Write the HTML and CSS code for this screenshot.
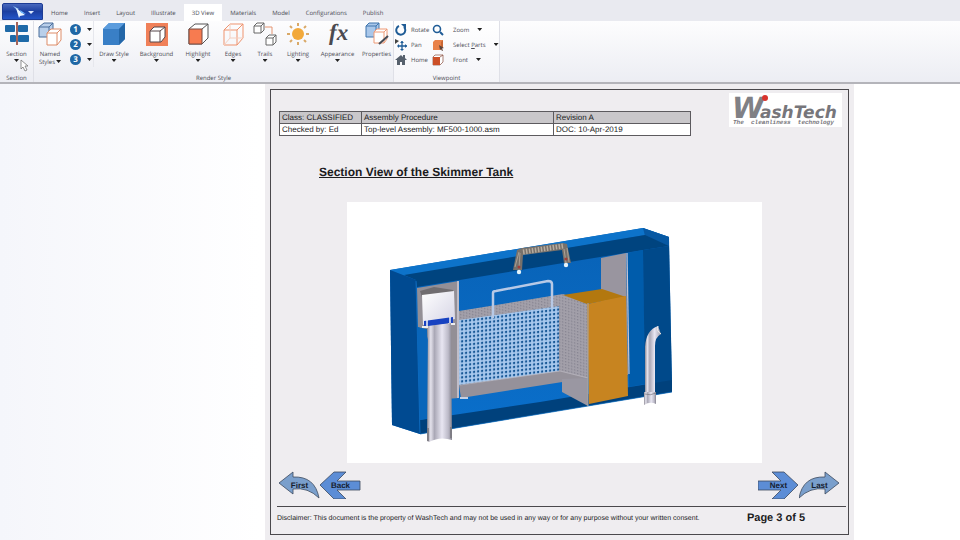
FILE: index.html
```html
<!DOCTYPE html>
<html lang="en">
<head>
<meta charset="utf-8">
<title>Section View of the Skimmer Tank</title>
<link rel="stylesheet" href="styles.css">
</head>
<body>
<header class="app-bar">
  <nav class="tabs" aria-label="Ribbon tabs">
    <button class="file-button" aria-label="File">
      <svg width="28" height="14" viewBox="0 0 28 14"><path d="M4 1l6 3-2 1z" fill="#9fd0ff"/><path d="M7 3l9 7-5 1-1 2z" fill="#eaf6ff"/><path d="M11 5l6 4-5-1z" fill="#6fb6ff"/><path d="M19 6h6l-3 3z" fill="#dbe9ff"/></svg>
    </button>
    <button class="tab">Home</button>
    <button class="tab">Insert</button>
    <button class="tab">Layout</button>
    <button class="tab">Illustrate</button>
    <button class="tab tab-active" aria-current="page">3D View</button>
    <button class="tab">Materials</button>
    <button class="tab">Model</button>
    <button class="tab">Configurations</button>
    <button class="tab">Publish</button>
  </nav>
  <div class="ribbon">
    <section class="group group-section">
      <div class="tools">
        <button class="tool">
          <svg class="icon" viewBox="0 0 24 24"><g fill="#1f6aa8"><rect x="0" y="3" width="10" height="7" rx="1"/><rect x="13" y="3" width="10" height="7" rx="1"/><rect x="5" y="13" width="6" height="7" rx="1"/><rect x="13" y="13" width="11" height="7" rx="1"/></g><path d="M12 0v23" stroke="#a5645a" stroke-width="2"/></svg>
          <span>Section</span><i class="caret"></i>
        </button>
      </div>
      <h2>Section</h2>
      <svg class="cursor" width="9" height="13" viewBox="0 0 9 13"><path d="M1 1v9l2-2 2 4 2-1-2-4h3z" fill="#fff" stroke="#777" stroke-width=".8"/></svg>
    </section>
    <section class="group group-style">
      <div class="tools tools-style">
        <button class="tool">
          <svg class="icon" viewBox="0 0 24 24"><path d="M1 5l5-4h9v10l-4 4H1z" fill="#b9cfea" stroke="#4a6f9c"/><path d="M1 5h10v10M11 5l4-4" fill="none" stroke="#4a6f9c"/><path d="M9 11l4-4h10v11l-4 5H9z" fill="#fff" stroke="#dd8c68"/><path d="M9 11h10v12M19 11l4-4" fill="none" stroke="#dd8c68"/></svg>
          <span>Named</span><span>Styles<i class="caret caret-inline"></i></span>
        </button>
        <div class="numbers">
          <button class="number"><b>1</b><i class="caret"></i></button>
          <button class="number"><b>2</b><i class="caret"></i></button>
          <button class="number"><b>3</b><i class="caret"></i></button>
        </div>
        <button class="tool">
          <svg class="icon" viewBox="0 0 24 24"><path d="M1 7l6-6h16v16l-6 6H1z" fill="#397fc6"/><path d="M1 7l6-6h16l-6 6z" fill="#5b9cdd"/><path d="M17 7l6-6v16l-6 6z" fill="#2467a8"/></svg>
          <span>Draw Style</span><i class="caret"></i>
        </button>
        <button class="tool">
          <svg class="icon" viewBox="0 0 24 24"><rect x="1" y="1" width="22" height="23" fill="#f08059"/><path d="M5 9l4-4h11v10l-4 5H5z" fill="#fff" stroke="#56474a"/><path d="M5 9h10v11M15 9l5-4" fill="none" stroke="#56474a"/></svg>
          <span>Background</span><i class="caret"></i>
        </button>
        <button class="tool">
          <svg class="icon" viewBox="0 0 24 24"><path d="M3 7l6-5h13v14l-6 6H3z" fill="#fff" stroke="#555"/><path d="M3 7h13v15H3z" fill="#f77b50" stroke="#7b4b40"/><path d="M16 7l6-5" stroke="#555"/></svg>
          <span>Highlight</span><i class="caret"></i>
        </button>
        <button class="tool">
          <svg class="icon" viewBox="0 0 24 24"><g fill="none" stroke="#ef936e"><path d="M3 8l6-6h13v14l-6 7H3zM3 8h13v15M16 8l6-6"/><path d="M9 2v14h13M9 16l-6 7" stroke="#f5cfc0"/></g></svg>
          <span>Edges</span><i class="caret"></i>
        </button>
        <button class="tool">
          <svg class="icon" viewBox="0 0 24 24"><g fill="#fff" stroke="#666"><path d="M1 4l3-3h7v7l-3 3H1zM1 4h7v7M8 4l3-3M13 16l3-3h7v7l-3 3h-7zM13 16h7v7M20 16l3-3"/></g><path d="M12 5h7v7" fill="none" stroke="#e59470"/></svg>
          <span>Trails</span><i class="caret"></i>
        </button>
        <button class="tool">
          <svg class="icon" viewBox="0 0 24 24"><circle cx="12" cy="12" r="6" fill="#f2a93b"/><path d="M12 1v3M12 20v3M1 12h3M20 12h3M4 4l2 2M18 18l2 2M4 20l2-2M18 6l2-2" stroke="#d9a968" stroke-width="2"/></svg>
          <span>Lighting</span><i class="caret"></i>
        </button>
        <button class="tool">
          <svg class="icon" viewBox="0 0 24 24"><text class="fx" x="3" y="18">fx</text></svg>
          <span>Appearance</span><i class="caret"></i>
        </button>
        <button class="tool">
          <svg class="icon" viewBox="0 0 24 24"><path d="M1 4l3-3h10v10l-3 4H1z" fill="#a9c7ea" stroke="#3f74ad"/><path d="M1 4h10v11M11 4l3-3" fill="none" stroke="#3f74ad"/><path d="M9 10l3-3h10v10l-3 4H9z" fill="#fff" stroke="#ee9a76"/><path d="M9 10h10v11M19 10l3-3" fill="none" stroke="#ee9a76"/><path d="M14 22l9-8" stroke="#444b55" stroke-width="2"/></svg>
          <span>Properties</span>
        </button>
      </div>
      <h2>Render Style</h2>
    </section>
    <section class="group group-view">
      <div class="view-grid">
        <button class="view"><svg viewBox="0 0 12 12"><path d="M4 2a4.500 4.500 0 1 0 5 1" fill="none" stroke="#1f5c96" stroke-width="2"/><path d="M6 0h5v5z" fill="#1f5c96"/></svg>Rotate</button>
        <button class="view"><svg viewBox="0 0 12 12"><circle cx="5" cy="5" r="3.500" fill="none" stroke="#1f5c96" stroke-width="1.600"/><path d="M8 8l3 3" stroke="#1f5c96" stroke-width="2"/></svg><span class="view-name">Zoom</span><i class="caret"></i></button>
        <button class="view"><svg viewBox="0 0 12 12"><path d="M0 0l4 2-4 3z" fill="#444"/><path d="M7 2v9M3 7h9" stroke="#1f5c96" stroke-width="1.300"/><path d="M5 4l2-2 2 2zM5 10l2 2 2-2zM4 5L2 7l2 2zM10 5l2 2-2 2z" fill="#1f5c96"/></svg>Pan</button>
        <button class="view"><svg viewBox="0 0 12 12"><path d="M1 3l2-2h8v7l-2 3H1z" fill="#e98249"/><path d="M9 3l2-2v7l-2 2z" fill="#c96632"/><path d="M7 6l5 3-2 .5 1 2-1 .5-1-2-1 1z" fill="#5c4238"/></svg><span class="view-name">Select <u>P</u>arts</span><i class="caret"></i></button>
        <button class="view"><svg viewBox="0 0 12 12"><path d="M0 6l6-5 2 2V1h2v3l2 2H10v5H7V8H5v3H2V6z" fill="#56606c"/></svg>Home</button>
        <button class="view"><svg viewBox="0 0 12 12"><path d="M1 3l2-2h8v7l-3 3H1z" fill="#fff" stroke="#884b3b" stroke-width=".7"/><path d="M1 3h7v8H1z" fill="#cc4f26"/><path d="M8 3l3-2" stroke="#884b3b" stroke-width=".7"/></svg><span class="view-name">Front</span><i class="caret"></i></button>
      </div>
      <h2>Viewpoint</h2>
    </section>
  </div>
</header>

<main class="workspace">
  <article class="sheet">
    <div class="frame">
      <div class="doc-head">
        <table class="info">
          <tr class="info-top"><td>Class: CLASSIFIED</td><td>Assembly Procedure</td><td>Revision A</td></tr>
          <tr><td>Checked by: Ed</td><td>Top-level Assembly: MF500-1000.asm</td><td>DOC: 10-Apr-2019</td></tr>
        </table>
        <svg class="logo" width="113" height="34" viewBox="0 0 113 34" role="img" aria-label="WashTech">
          <rect width="113" height="34" fill="#fff"/>
          <text class="logo-w" x="3" y="25">W</text>
          <text class="logo-name" x="31" y="25">ashTech</text>
          <text class="logo-tag" x="4" y="31" xml:space="preserve">The  cleanliness  technology</text>
          <circle cx="36" cy="5" r="3" fill="#d8322c"/>
        </svg>
      </div>
      <h1>Section View of the Skimmer Tank</h1>
      <svg class="drawing" viewBox="347 202 415 261" role="img" aria-label="Skimmer tank cut open">
        <defs>
          <pattern id="holes" width="4" height="4" patternUnits="userSpaceOnUse" patternTransform="skewY(-7)"><rect width="4" height="4" fill="#a9c9ee"/><rect x="1" y="1" width="2.200" height="2.200" fill="#175795"/></pattern>
          <pattern id="mesh" width="3" height="3" patternUnits="userSpaceOnUse" patternTransform="skewY(14)"><rect width="3" height="3" fill="#a3a0aa"/><rect x="1" y="1" width="1.400" height="1.400" fill="#84828f"/></pattern>
          <linearGradient id="pipe"><stop offset="0" stop-color="#8f8c96"/><stop offset=".15" stop-color="#e4e2ec"/><stop offset=".3" stop-color="#aaa8b6"/><stop offset=".6" stop-color="#e8e6f2"/><stop offset=".85" stop-color="#bcbac8"/><stop offset="1" stop-color="#85838f"/></linearGradient>
          <linearGradient id="wall" x1="0" y1="0" x2="0" y2="1"><stop offset="0" stop-color="#0862b6"/><stop offset="1" stop-color="#0a6fcb"/></linearGradient>
          <linearGradient id="box" x1="0" y1="0" x2="1" y2="1"><stop offset="0" stop-color="#fff"/><stop offset="1" stop-color="#d4d3e4"/></linearGradient>
        </defs>
        <rect x="347" y="202" width="415" height="261" fill="#fff"/>
        <path d="M390 270L643 228L669 237L672 392L420 434L392 425Z" fill="url(#wall)"/>
        <path d="M390 270L643 228L669 237L645 235L404 276Z" fill="#0d73ca"/>
        <path d="M643 228L669 237V246L645 236Z" fill="#0758a3"/>
        <path d="M404 275L645 235L669 246L643 250L417 287L416 280Z" fill="#00447f"/>
        <path d="M627 253L643 250L645 384L629 387Z" fill="#005cab"/>
        <path d="M643 250L669 246L672 381L645 385Z" fill="#00498a"/>
        <path d="M420 420L540 402L672 380V392L420 434Z" fill="#00417c"/>
        <path d="M390 270L416 280L420 434L392 425Z" fill="#004a91"/>
        <path d="M416 281L420 433" stroke="#1170c4" stroke-width=".8"/>
        <path d="M420 434L672 392" stroke="#0d69b8" stroke-width=".7"/>
        <path d="M417 288L459 281V398L446 399L425 330L418 327Z" fill="#938f96"/>
        <path d="M417 327L427 329L430 418L420 420Z" fill="#0966ba"/>
        <path d="M420 291L434 287L453 290L454 294L422 297Z" fill="#706d70"/>
        <path d="M422 295L454 291L455 319L423 325Z" fill="url(#box)"/>
        <path d="M424 321L453 317V323L424 327Z" fill="#1742c1"/>
        <path d="M427 320V326M450 317V323" stroke="#f3f3f8" stroke-width="1.500"/>
        <path d="M422 327H428M448 324H455" stroke="#eee" stroke-width="2"/>
        <path d="M428 326L451 323L452 440Q440 436 429 442L427 441Z" fill="url(#pipe)"/>
        <path d="M428 428V441M451 427V438" stroke="#77757c" stroke-width="1.500"/>
        <path d="M458 281V398" stroke="#cfcdd9" stroke-width="1.500"/>
        <path d="M459 311L563 294L588 303L560 307L459 321Z" fill="url(#mesh)"/>
        <path d="M459 320L560 306V373L459 385Z" fill="url(#holes)"/>
        <path d="M559 305L588 303V379L559 372Z" fill="url(#mesh)"/>
        <path d="M459 385L560 371L588 378L461 398Z" fill="#95919a"/>
        <path d="M460 385L560 371L588 378" fill="none" stroke="#bdbac3" stroke-width=".7"/>
        <path d="M562 379L588 378V406L562 392Z" fill="#9a97a2"/>
        <path d="M460 398H468" stroke="#c4d0e3" stroke-width="2"/>
        <path d="M601 258L626 253L628 375H626L601 330Z" fill="#99959f"/>
        <path d="M627 253L629 374" stroke="#c8c6d4" stroke-width="1.200"/>
        <path d="M563 295L602 289L626 297L587 304Z" fill="#b3780f"/>
        <path d="M587 304L626 296L628 396L589 404Z" fill="#c78420"/>
        <path d="M588 303V406" stroke="#a9a6a5" stroke-width="1"/>
        <path d="M493 318V293Q493 291 496 291L548 281Q552 281 552 284V308" fill="none" stroke="#b7c9e6" stroke-width="2.500"/>
        <path d="M513 270L517 250L522 248L563 243L567 244L571 263H564L562 250L523 255L522 270Z" fill="#77716b"/>
        <path d="M523 252L563 246" stroke="#b6aca0" stroke-width="5" stroke-dasharray="1.500 1.500"/>
        <path d="M515 267L519 252M519 268L520 253M564 249L566 263M567 248L569 262" stroke="#aaa095" stroke-width="1"/>
        <circle cx="519" cy="267" r="1.500" fill="#a43e38"/><circle cx="566" cy="259" r="1.500" fill="#a43e38"/>
        <circle cx="519" cy="272" r="2.200" fill="#e4f4fb"/><circle cx="566" cy="265" r="2.200" fill="#e4f4fb"/>
        <path d="M645 396V347Q646 330 658 326L661 334Q655 337 655 346V396Z" fill="url(#pipe)"/>
        <path d="M658 326Q656 331 661 334" fill="none" stroke="#eee" stroke-width="1"/>
        <path d="M644 392H656V404Q650 401 644 405Z" fill="url(#pipe)"/>
        <path d="M645 394Q650 396 656 393" fill="none" stroke="#77757c" stroke-width=".7"/>
      </svg>
      <nav class="pager" aria-label="Pages">
        <a class="step" href="#first"><svg viewBox="0 0 41 28"><path d="M0 12L14 1V6Q36 5 40 27Q29 16 14 18V23Z" fill="#7a9fcc" stroke="#3c4a5e" stroke-width=".8"/></svg><span>First</span></a>
        <a class="step" href="#back"><svg viewBox="0 0 41 28"><path d="M0 14L14 1H26L17 10H40V19H17L26 28H14Z" fill="#5c8dd6" stroke="#3c4a5e" stroke-width=".8"/></svg><span>Back</span></a>
        <a class="step step-forward" href="#next"><svg viewBox="0 0 41 28"><path d="M40 14L26 1H14L23 10H0V19H23L14 28H26Z" fill="#5c8dd6" stroke="#3c4a5e" stroke-width=".8"/></svg><span>Next</span></a>
        <a class="step" href="#last"><svg viewBox="0 0 41 28"><path d="M40 12L26 1V6Q4 5 0 27Q11 16 26 18V23Z" fill="#7a9fcc" stroke="#3c4a5e" stroke-width=".8"/></svg><span>Last</span></a>
      </nav>
      <footer class="doc-foot">
        <p>Disclaimer: This document is the property of WashTech and may not be used in any way or for any purpose without your written consent.</p>
        <strong>Page 3 of 5</strong>
      </footer>
    </div>
  </article>
</main>
</body>
</html>
```
FILE: styles.css
```css
* { box-sizing: border-box; }

body {
  margin: 0;
  min-height: 100vh;
  display: flex;
  flex-direction: column;
  background: #fff;
  color: #1c1c1e;
  font-family: "Liberation Sans", sans-serif;
  text-rendering: geometricPrecision;
}

button {
  border: 0;
  padding: 0;
  background: none;
  color: inherit;
  font: inherit;
  text-rendering: inherit;
}

h1, h2, p { margin: 0; font-weight: 400; }

.app-bar {
  color: #4b4c55;
  font-family: "Open Sans", "Noto Sans", sans-serif;
  font-size: 6px;
  line-height: 8px;
  border-bottom: 2px solid #b4b4ba;
}

/* Tabs */
.tabs {
  display: flex;
  align-items: flex-end;
  height: 21px;
  padding-left: 2px;
  background: #e9eaf0;
}

.file-button {
  width: 41px;
  height: 17px;
  margin-bottom: 1px;
  border: 1px solid #1d3c94;
  border-radius: 2px 2px 0 0;
  background: linear-gradient(#4868bd, #1c3fa0 50%, #2455c8);
}

.file-button svg { display: block; margin: auto; }

.tab { height: 17px; padding: 0 8px; }

.tab-active { background: #fff; }

/* Ribbon */
.ribbon {
  display: flex;
  height: 61px;
  background: linear-gradient(#fdfdfe, #ecedf3);
}

.group {
  position: relative;
  display: flex;
  flex-direction: column;
  justify-content: space-between;
  border-right: 1px solid #dfe0e7;
}

.group h2 { font-size: 6px; text-align: center; }

.group-section { width: 34px; }
.group-view { width: 106px; background: linear-gradient(#fff, #f4f4f8); }

.tools { display: grid; grid-auto-flow: column; }

.tools-style { grid-template-columns: 32px 28px 40px 45px 38px 32px 32px 34px 45px 33px; }

.tool {
  display: flex;
  flex-direction: column;
  align-items: center;
  justify-content: flex-start;
  padding-top: 1px;
  white-space: nowrap;
}

.icon { width: 24px; height: 24px; margin-bottom: 4px; overflow: visible; }

.fx {
  fill: #4a4a50;
  font: italic bold 23px "Liberation Serif", serif;
}

.caret {
  width: 5px;
  height: 3px;
  background: #222;
  clip-path: polygon(0 0, 100% 0, 50% 100%);
}

.tool > .caret { margin-top: 1px; }

.caret-inline { display: inline-block; margin-left: 1px; vertical-align: 1px; }

.numbers {
  display: grid;
  grid-auto-rows: 15px;
  padding-top: 1px;
  align-content: start;
  border-right: 1px solid #e6e7ed;
}

.number {
  display: flex;
  align-items: center;
  gap: 6px;
  padding-left: 4px;
}

.number b {
  width: 11px;
  height: 11px;
  border-radius: 50%;
  background: #1f67a5;
  color: #fff;
  font-size: 8px;
  line-height: 11px;
}

.view-grid {
  display: grid;
  grid-template-columns: 37px 1fr;
  grid-auto-rows: 15px;
  padding: 1px 0 0 1px;
}

.view { display: flex; align-items: center; gap: 4px; white-space: nowrap; }

.view svg { width: 12px; height: 12px; }

.view-name { margin: 0 4px 0 5px; }

.cursor { position: absolute; left: 20px; top: 38px; }

/* Document */
.workspace {
  flex: 1;
  display: flex;
  padding: 0 106px 0 265px;
  background: linear-gradient(90deg, #f5f6fb, #fff 260px);
}

.sheet { flex: 1; min-width: 0; padding: 5px; background: #efedf0; }

.frame { height: 100%; border: 1px solid #4a484c; }

.doc-head {
  display: flex;
  justify-content: space-between;
  align-items: flex-start;
  padding: 3px 6px 0 8px;
}

.info {
  width: 412px;
  margin-top: 18px;
  border-collapse: collapse;
  table-layout: fixed;
  background: #fff;
  font-size: 8px;
  line-height: 11px;
}

.info td { padding: 0 2px; border: 1px solid #5c5a5e; }
.info td:first-child { width: 82px; }
.info td:last-child { width: 137px; }
.info-top { background: #c9c7ca; }

.logo-w { fill: #808085; font: italic bold 29px "DejaVu Sans", sans-serif; }
.logo-name { fill: #77767b; font: italic bold 17px "DejaVu Sans", sans-serif; }
.logo-tag { fill: #77767b; font: italic bold 6px "Liberation Mono", monospace; white-space: pre; }

h1 {
  margin: 29px 0 23px 48px;
  font-size: 12px;
  font-weight: 700;
  line-height: 14px;
  text-decoration: underline;
}

.drawing { display: block; margin: 0 86px 0 76px; }

.pager { display: flex; padding: 8px 8px 7px; }

.step {
  display: grid;
  width: 41px;
  height: 28px;
  place-items: center;
  color: #17202e;
  font-size: 8px;
  font-weight: 700;
  text-decoration: none;
}

.step > * { grid-area: 1 / 1; }
.step svg { width: 100%; height: 100%; }
.step-forward { margin-left: auto; }

.doc-foot {
  display: flex;
  justify-content: space-between;
  align-items: center;
  margin: 0 2px 0 6px;
  padding: 5px 41px 0 0;
  border-top: 1px solid #4a484c;
  white-space: nowrap;
}

.doc-foot p { font-size: 7px; }
.doc-foot strong { font-size: 11px; line-height: 12px; }
```
